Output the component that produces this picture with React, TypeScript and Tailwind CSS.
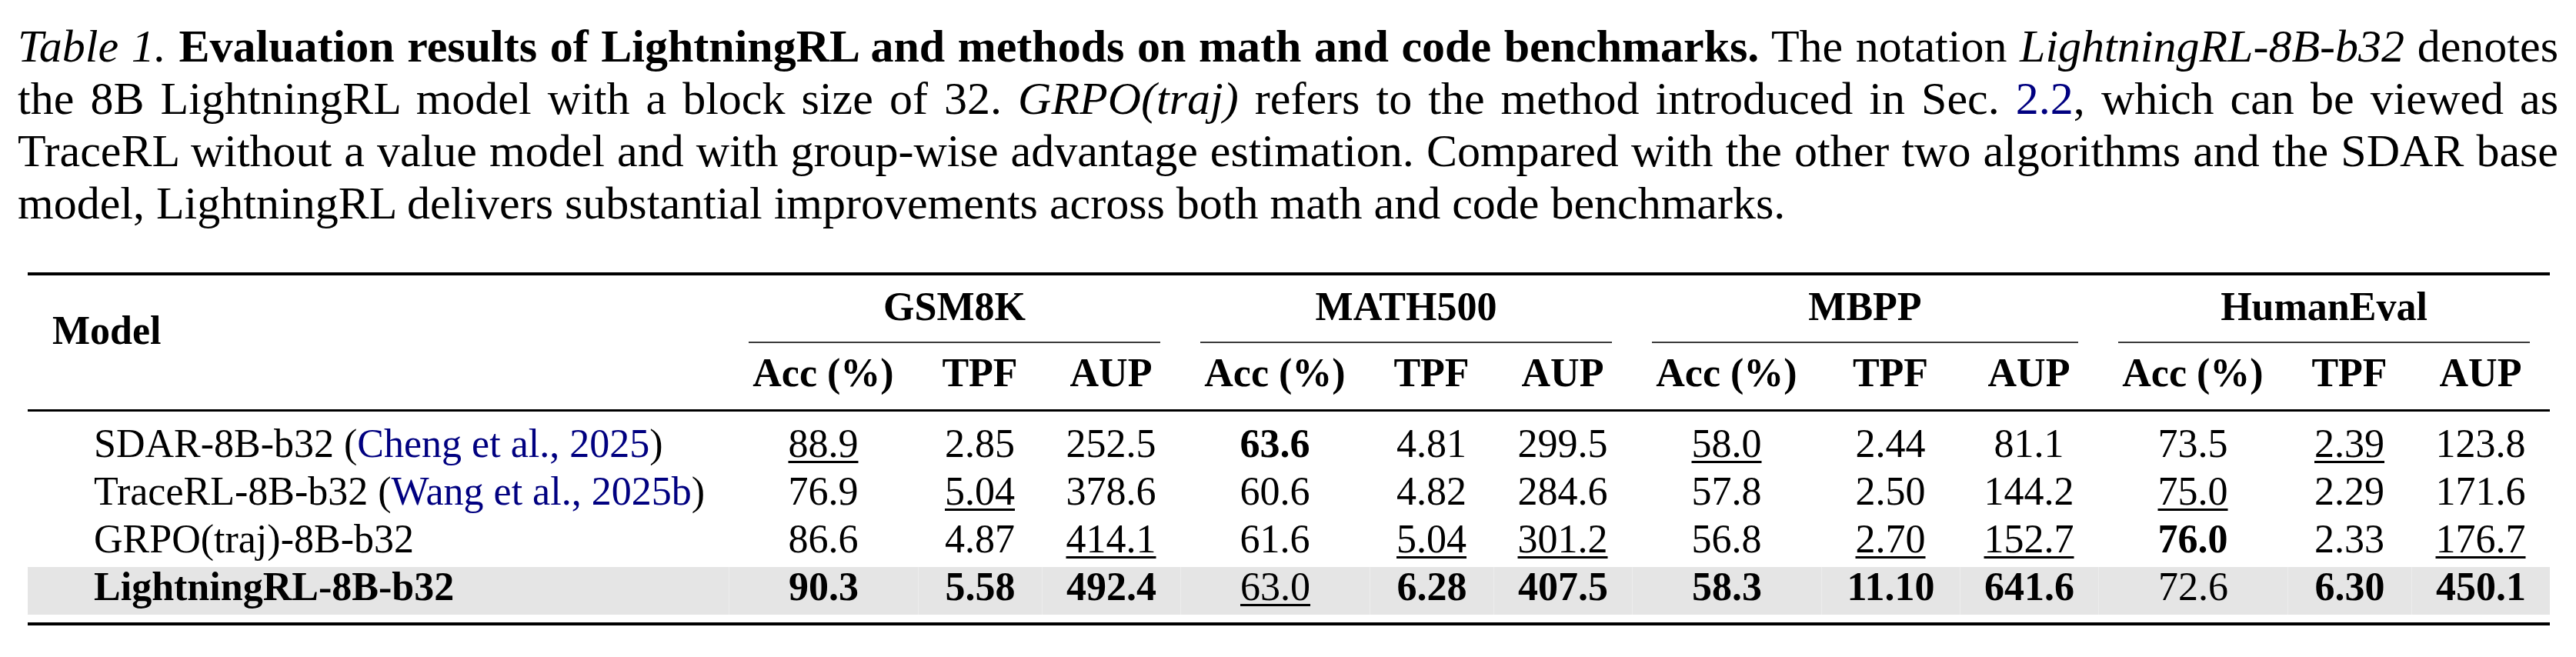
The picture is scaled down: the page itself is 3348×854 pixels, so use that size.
import React from "react";

type Cell = { v: string; b?: boolean; u?: boolean };
const C = (v: string, f = ""): Cell => ({ v, b: f.includes("b"), u: f.includes("u") });

const COLS =
  "grid grid-cols-[911px_246px_161px_180px_246px_161px_180px_246px_180px_180px_246px_161px_180px]";

const groups = ["GSM8K", "MATH500", "MBPP", "HumanEval"];
const subs = ["Acc (%)", "TPF", "AUP", "Acc (%)", "TPF", "AUP", "Acc (%)", "TPF", "AUP", "Acc (%)", "TPF", "AUP"];

const cite = "text-[#000080]";

const rows: { name: React.ReactNode; hl?: boolean; cells: Cell[] }[] = [
  {
    name: (
      <>
        SDAR-8B-b32 (<span className={cite}>Cheng et al., 2025</span>)
      </>
    ),
    cells: [C("88.9", "u"), C("2.85"), C("252.5"), C("63.6", "b"), C("4.81"), C("299.5"), C("58.0", "u"), C("2.44"), C("81.1"), C("73.5"), C("2.39", "u"), C("123.8")],
  },
  {
    name: (
      <>
        TraceRL-8B-b32 (<span className={cite}>Wang et al., 2025b</span>)
      </>
    ),
    cells: [C("76.9"), C("5.04", "u"), C("378.6"), C("60.6"), C("4.82"), C("284.6"), C("57.8"), C("2.50"), C("144.2"), C("75.0", "u"), C("2.29"), C("171.6")],
  },
  {
    name: <>GRPO(traj)-8B-b32</>,
    cells: [C("86.6"), C("4.87"), C("414.1", "u"), C("61.6"), C("5.04", "u"), C("301.2", "u"), C("56.8"), C("2.70", "u"), C("152.7", "u"), C("76.0", "b"), C("2.33"), C("176.7", "u")],
  },
  {
    name: <span className="font-bold">LightningRL-8B-b32</span>,
    hl: true,
    cells: [C("90.3", "b"), C("5.58", "b"), C("492.4", "b"), C("63.0", "u"), C("6.28", "b"), C("407.5", "b"), C("58.3", "b"), C("11.10", "b"), C("641.6", "b"), C("72.6"), C("6.30", "b"), C("450.1", "b")],
  },
];

function Num({ c }: { c: Cell }) {
  const cls = [c.b ? "font-bold" : "", c.u ? "underline decoration-[2.5px] underline-offset-[5px]" : ""].join(" ");
  return <span className={cls}>{c.v}</span>;
}

export default function App() {
  return (
    <div className="w-[3348px] h-[854px] bg-white text-black overflow-hidden font-['Liberation_Serif','Times_New_Roman',serif]">
      {/* Caption */}
      <div className="pt-[26px] pl-[23px] text-[60px] leading-[68px]">
        <div className="w-[3302px] whitespace-nowrap text-justify [text-align-last:justify]">
          <i>Table 1.</i> <b>Evaluation results of LightningRL and methods on math and code benchmarks.</b> The notation{" "}
          <i>LightningRL-8B-b32</i> denotes
        </div>
        <div className="w-[3302px] whitespace-nowrap text-justify [text-align-last:justify]">
          the 8B LightningRL model with a block size of 32. <i>GRPO(traj)</i> refers to the method introduced in Sec.{" "}
          <span className={cite}>2.2</span>, which can be viewed as
        </div>
        <div className="w-[3302px] whitespace-nowrap text-justify [text-align-last:justify]">
          TraceRL without a value model and with group-wise advantage estimation. Compared with the other two algorithms and the SDAR base
        </div>
        <div className="w-[3302px] whitespace-nowrap">
          model, LightningRL delivers substantial improvements across both math and code benchmarks.
        </div>
      </div>

      {/* Table */}
      <div className="ml-[36px] mt-[56px] w-[3278px] text-[52px] leading-[52px]">
        <div className="h-[4px] bg-black" />
        <div className={COLS}>
          <div className="row-span-3 pl-[32px] pt-[46px] font-bold">Model</div>
          {groups.map((g) => (
            <div key={g} className="col-span-3 h-[86px] pt-[15px] text-center font-bold">
              {g}
            </div>
          ))}
          {groups.map((g) => (
            <div key={g + "r"} className="col-span-3 px-[26px]">
              <div className="h-[2px] bg-[#3c3c3c]" />
            </div>
          ))}
          {subs.map((s, i) => (
            <div key={i} className="h-[86px] pt-[13px] text-center font-bold whitespace-nowrap">
              {s}
            </div>
          ))}
        </div>
        <div className="h-[3px] bg-black" />
        <div className="pt-[16px] pb-[10px]">
          {rows.map((r, ri) => (
            <div key={ri} className={`${COLS} h-[62px] ${r.hl ? "bg-[#e5e5e5]" : ""}`}>
              <div className="pl-[86px] whitespace-nowrap">{r.name}</div>
              {r.cells.map((c, ci) => (
                <div
                  key={ci}
                  className={`text-center whitespace-nowrap ${r.hl ? "border-l border-[#ededed]" : ""}`}
                >
                  <Num c={c} />
                </div>
              ))}
            </div>
          ))}
        </div>
        <div className="h-[4px] bg-black" />
      </div>
    </div>
  );
}
